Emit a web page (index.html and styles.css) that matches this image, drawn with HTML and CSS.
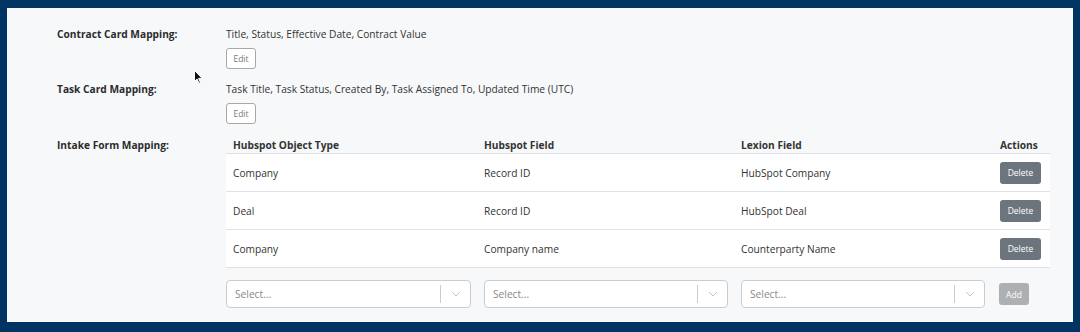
FILE: index.html
```html
<!DOCTYPE html>
<html lang="en">
<head>
  <meta charset="UTF-8">
  <meta name="viewport" content="width=device-width, initial-scale=1.0">
  <title>Hubspot Settings</title>
  <link rel="stylesheet" href="styles.css">
</head>
<body>
  <div class="panel">
    <div class="mapping">
      <div class="label">Contract Card Mapping:</div>
      <div class="value">
        <div class="fields">Title, Status, Effective Date, Contract Value</div>
        <button type="button" class="btn-edit">Edit</button>
      </div>

      <div class="label">Task Card Mapping:</div>
      <div class="value">
        <div class="fields">Task Title, Task Status, Created By, Task Assigned To, Updated Time (UTC)</div>
        <button type="button" class="btn-edit">Edit</button>
      </div>

      <div class="label label-intake">Intake Form Mapping:</div>
      <div class="value">
        <table class="intake">
          <thead>
            <tr>
              <th class="col-type">Hubspot Object Type</th>
              <th class="col-field">Hubspot Field</th>
              <th class="col-lexion">Lexion Field</th>
              <th class="col-actions">Actions</th>
            </tr>
          </thead>
          <tbody>
            <tr>
              <td>Company</td>
              <td>Record ID</td>
              <td>HubSpot Company</td>
              <td class="col-actions"><button type="button" class="btn-delete">Delete</button></td>
            </tr>
            <tr>
              <td>Deal</td>
              <td>Record ID</td>
              <td>HubSpot Deal</td>
              <td class="col-actions"><button type="button" class="btn-delete">Delete</button></td>
            </tr>
            <tr>
              <td>Company</td>
              <td>Company name</td>
              <td>Counterparty Name</td>
              <td class="col-actions"><button type="button" class="btn-delete">Delete</button></td>
            </tr>
          </tbody>
        </table>

        <div class="add-row">
          <div class="select">
            <span class="placeholder">Select...</span>
            <span class="divider"></span>
            <svg class="chevron" width="10" height="6" viewBox="0 0 10 6"><path d="M1 1l4 4 4-4" fill="none" stroke="#c4c4c4" stroke-width="1"/></svg>
          </div>
          <div class="select">
            <span class="placeholder">Select...</span>
            <span class="divider"></span>
            <svg class="chevron" width="10" height="6" viewBox="0 0 10 6"><path d="M1 1l4 4 4-4" fill="none" stroke="#c4c4c4" stroke-width="1"/></svg>
          </div>
          <div class="select">
            <span class="placeholder">Select...</span>
            <span class="divider"></span>
            <svg class="chevron" width="10" height="6" viewBox="0 0 10 6"><path d="M1 1l4 4 4-4" fill="none" stroke="#c4c4c4" stroke-width="1"/></svg>
          </div>
          <button type="button" class="btn-add" disabled>Add</button>
        </div>
      </div>
    </div>

    <!-- mouse pointer caught in the screenshot -->
    <svg class="cursor" width="9" height="14" viewBox="0 0 9 14">
      <path d="M0.5 0.5v11l2.6-2.5 1.9 4.3 1.5-0.7-1.9-4.2h3.6z" fill="#111" stroke="#fff" stroke-width="1"/>
    </svg>
  </div>
</body>
</html>
```

FILE: styles.css
```css
body {
  margin: 0;
  background-color: #003462; /* Navy frame */
  font-family: 'Open Sans', 'Noto Sans', sans-serif;
  font-size: 10.2px;
  color: #333;
  height: 332px;
  box-sizing: border-box;
  padding: 8px 7px 10px 7px;
}

.panel {
  position: relative;
  background-color: #f7f8fa;
  height: 100%;
  box-sizing: border-box;
  padding: 18px 0 0 50px;
}

.mapping {
  display: grid;
  grid-template-columns: 169px 824px;
  row-gap: 12px;
}

.label {
  font-weight: 700;
  line-height: 16px;
  color: #2b2b2b;
}

.label-intake {
  padding-top: 1px;
}

.fields {
  line-height: 16px;
}

.btn-edit {
  display: block;
  margin-top: 6px;
  height: 21px;
  width: 30px;
  padding: 0;
  font-family: inherit;
  font-size: 8.5px;
  color: #777;
  background-color: #fff;
  border: 1px solid #a8a8a8;
  border-radius: 3px;
}

.intake {
  width: 824px;
  border-collapse: collapse;
  table-layout: fixed;
}

.intake th {
  text-align: left;
  font-weight: 700;
  height: 17px;
  padding: 0 7px;
  border-bottom: 1px solid #dee2e6;
  vertical-align: middle;
}

.intake td {
  height: 37px;
  padding: 0 7px;
  background-color: #fff;
  border-bottom: 1px solid #dee2e6;
}

.col-type { width: 237px; }
.col-field { width: 243px; }
.col-lexion { width: 245px; }

.intake .col-actions {
  text-align: right;
  padding-right: 11px;
}

.intake th.col-actions {
  padding-right: 14px;
}

.btn-delete {
  height: 22px;
  width: 41px;
  padding: 0;
  font-family: inherit;
  font-size: 8.5px;
  color: #fff;
  background-color: #6c757d;
  border: none;
  border-radius: 3px;
}

.add-row {
  display: flex;
  align-items: center;
  gap: 13px;
  margin-top: 12px;
}

.select {
  display: flex;
  align-items: center;
  width: 245px;
  height: 28px;
  box-sizing: border-box;
  background-color: #fff;
  border: 1px solid #ccc;
  border-radius: 4px;
  padding-left: 8px;
}

.select + .select {
  width: 244px;
}

.placeholder {
  flex: 1;
  color: #888;
}

.divider {
  width: 1px;
  height: 18px;
  background-color: #ccc;
}

.chevron {
  margin: 0 9px 0 10px;
}

.btn-add {
  margin-left: 1px;
  height: 22px;
  width: 30px;
  padding: 0;
  font-family: inherit;
  font-size: 8.5px;
  color: #fff;
  background-color: #adb0b3;
  border: none;
  border-radius: 3px;
}

.cursor {
  position: absolute;
  left: 187px;
  top: 62px;
}
```
